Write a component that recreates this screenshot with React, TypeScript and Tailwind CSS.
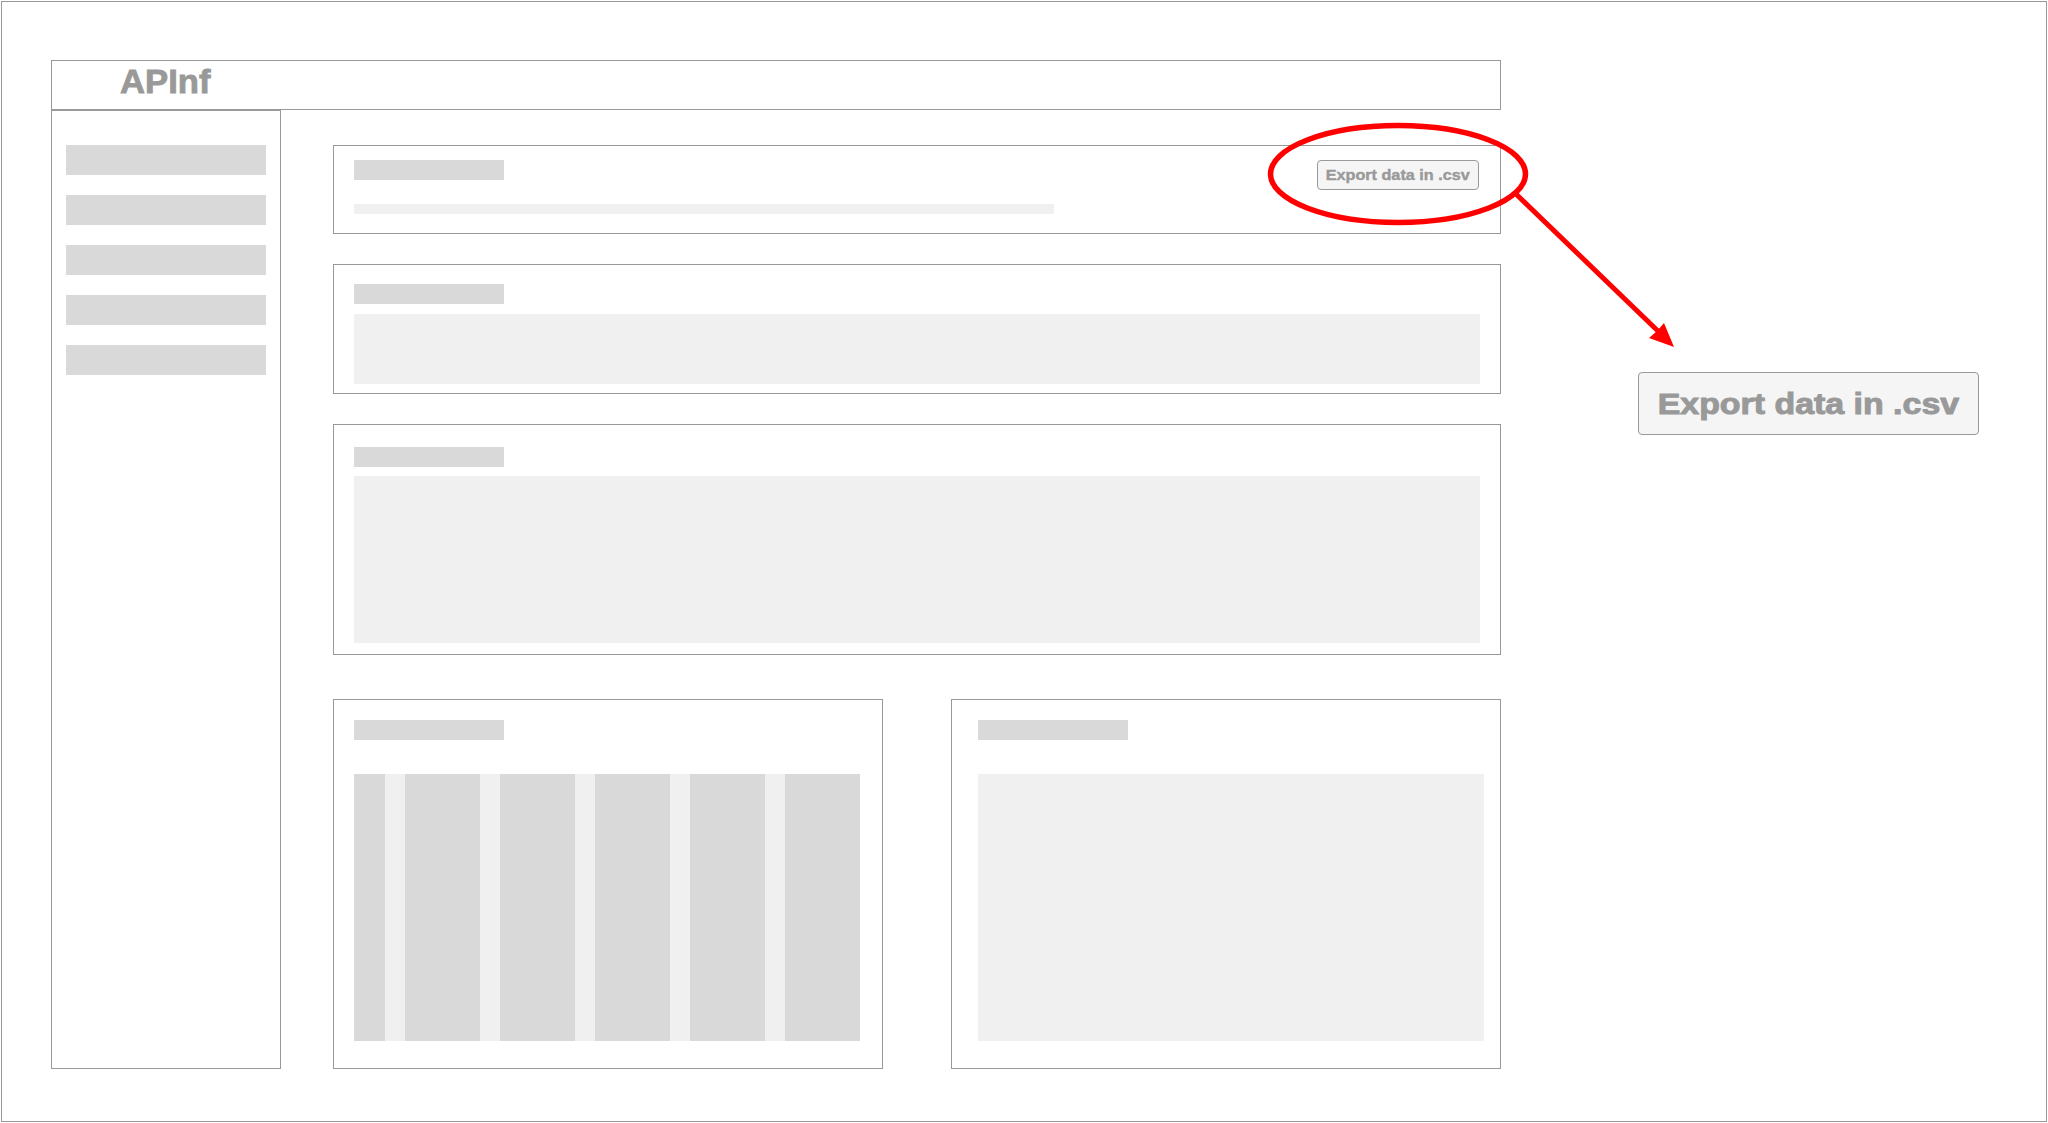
import React from "react";

const font = { fontFamily: '"Liberation Sans", Arial, sans-serif' };

function Bar({ w }: { w: string }) {
  return <div className={`${w} h-[20px] bg-[#d9d9d9]`} />;
}

function Annotations() {
  return (
    <svg
      className="pointer-events-none absolute left-0 top-0"
      width={2048}
      height={1123}
      viewBox="0 0 2048 1123"
    >
      <ellipse cx={1398} cy={174} rx={127.5} ry={48.5} fill="none" stroke="#ff0000" strokeWidth={5.5} />
      <line x1={1516} y1={194} x2={1660} y2={333} stroke="#ff0000" strokeWidth={5} />
      <polygon points="1674,347 1649,338 1657,331 1664,323" fill="#ff0000" />
    </svg>
  );
}

export default function App() {
  const sideItems = [0, 1, 2, 3, 4];
  return (
    <div className="relative h-[1123px] w-[2048px] overflow-hidden bg-white p-px" style={font}>
      <div className="flex h-full w-full border border-[#999] pl-[49px] pt-[58px]">
        {/* mockup */}
        <div className="flex w-[1450px] flex-col">
          <div className="flex h-[50px] items-start border border-[#999] pl-[68px] pt-[5px]">
            <span className="inline-block origin-left scale-x-[1.05] text-[33px] font-bold leading-[32px] text-[#999] [-webkit-text-stroke:0.8px_#999]">
              APInf
            </span>
          </div>

          <div className="flex">
            <div className="flex h-[959px] w-[230px] flex-col gap-[20px] border border-[#999] pl-[14px] pt-[34px]">
              {sideItems.map((i) => (
                <div key={i} className="h-[30px] w-[200px] bg-[#d9d9d9]" />
              ))}
            </div>

            <div className="ml-[52px] flex w-[1168px] flex-col pt-[35px]">
              {/* panel 1 */}
              <div className="flex h-[89px] justify-between border border-[#999] pl-[20px] pr-[21px] pt-[14px]">
                <div className="flex flex-col">
                  <Bar w="w-[150px]" />
                  <div className="mt-[24px] h-[10px] w-[700px] bg-[#f0f0f0]" />
                </div>
                <button
                  type="button"
                  className="flex h-[30px] w-[162px] items-center justify-center rounded-[4px] border border-[#999] bg-[#f5f5f5] text-[#999]"
                >
                  <span className="inline-block scale-x-[1.08] text-[15px] font-bold [-webkit-text-stroke:0.4px_#999]">
                    Export data in .csv
                  </span>
                </button>
              </div>

              {/* panel 2 */}
              <div className="mt-[30px] flex h-[130px] flex-col border border-[#999] pl-[20px] pr-[20px] pt-[19px]">
                <Bar w="w-[150px]" />
                <div className="mt-[10px] h-[70px] w-full bg-[#f0f0f0]" />
              </div>

              {/* panel 3 */}
              <div className="mt-[30px] flex h-[231px] flex-col border border-[#999] pl-[20px] pr-[20px] pt-[22px]">
                <Bar w="w-[150px]" />
                <div className="mt-[9px] h-[167px] w-full bg-[#f0f0f0]" />
              </div>

              {/* bottom row */}
              <div className="mt-[44px] flex gap-[68px]">
                <div className="flex h-[370px] w-[550px] flex-col border border-[#999] pl-[20px] pt-[20px]">
                  <Bar w="w-[150px]" />
                  <div className="mt-[34px] flex h-[267px] w-[506px] gap-[20px] bg-[#f0f0f0]">
                    <div className="h-full w-[31px] bg-[#d9d9d9]" />
                    <div className="h-full w-[75px] bg-[#d9d9d9]" />
                    <div className="h-full w-[75px] bg-[#d9d9d9]" />
                    <div className="h-full w-[75px] bg-[#d9d9d9]" />
                    <div className="h-full w-[75px] bg-[#d9d9d9]" />
                    <div className="h-full w-[75px] bg-[#d9d9d9]" />
                  </div>
                </div>
                <div className="flex h-[370px] w-[550px] flex-col border border-[#999] pl-[26px] pt-[20px]">
                  <Bar w="w-[150px]" />
                  <div className="mt-[34px] h-[267px] w-[506px] bg-[#f0f0f0]" />
                </div>
              </div>
            </div>
          </div>
        </div>

        {/* enlarged button */}
        <div className="ml-[137px] pt-[312px]">
          <button
            type="button"
            className="flex h-[63px] w-[341px] items-center justify-center rounded-[4px] border border-[#999] bg-[#f5f5f5] text-[#999]"
          >
            <span className="inline-block scale-x-[1.13] text-[30px] font-bold [-webkit-text-stroke:1px_#999]">
              Export data in .csv
            </span>
          </button>
        </div>
      </div>
      <Annotations />
    </div>
  );
}
